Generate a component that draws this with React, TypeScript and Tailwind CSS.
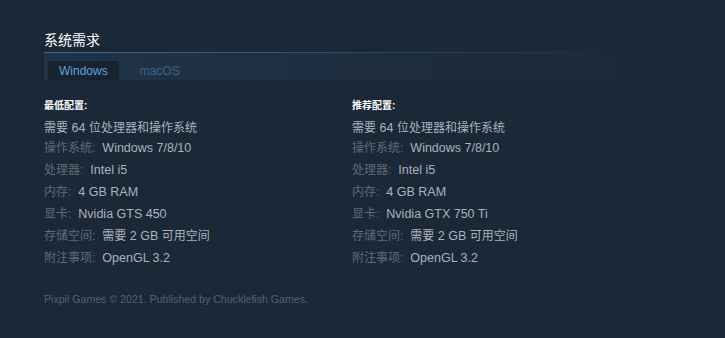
const font = { fontFamily: '"Liberation Sans", Arial, "Noto Sans CJK SC", sans-serif' }

type Req = { label?: string; value: string }

const minimum: Req[] = [
  { value: '需要 64 位处理器和操作系统' },
  { label: '操作系统:', value: 'Windows 7/8/10' },
  { label: '处理器:', value: 'Intel i5' },
  { label: '内存:', value: '4 GB RAM' },
  { label: '显卡:', value: 'Nvidia GTS 450' },
  { label: '存储空间:', value: '需要 2 GB 可用空间' },
  { label: '附注事项:', value: 'OpenGL 3.2' },
]

const recommended: Req[] = minimum.map((r) =>
  r.label === '显卡:' ? { ...r, value: 'Nvidia GTX 750 Ti' } : r
)

// CJK glyphs sit at 12px, latin runs a touch larger like the original page
function Mixed({ text }: { text: string }) {
  const parts = text.split(/([\u3000-\u9fff\uff00-\uffef]+)/).filter(Boolean)
  return (
    <>
      {parts.map((p, i) =>
        /[\u3000-\u9fff\uff00-\uffef]/.test(p) ? (
          <span key={i} className="text-[12px]">{p}</span>
        ) : (
          <span key={i} className="text-[12.5px]">{p}</span>
        )
      )}
    </>
  )
}

function ReqColumn({ title, items }: { title: string; items: Req[] }) {
  return (
    <div className="w-1/2">
      <div className="text-[10px] leading-[12px] font-bold text-white">{title}</div>
      <ul className="mt-[3px]">
        {items.map((item, i) => (
          <li
            key={i}
            className={`text-[12px] text-[#acb2b8] whitespace-nowrap ${i === 0 ? 'pt-[4px] leading-[18px]' : 'leading-[22px]'}`}
          >
            {item.label && <span className="text-[#5f6b77] mr-[7px]">{item.label}</span>}
            <Mixed text={item.value} />
          </li>
        ))}
      </ul>
    </div>
  )
}

export default function App() {
  return (
    <div className="w-[725px] h-[338px] bg-[#1b2838] overflow-hidden" style={font}>
      <div className="pl-[44px] pt-[32px] w-[660px]">
        {/* Header */}
        <h2 className="text-[14px] leading-[16px] text-white mb-[4px]">系统需求</h2>
        <div className="h-px w-[600px] bg-gradient-to-r from-[#3b6e8f] via-[#2c4e68] to-transparent" />
        <div className="h-[27px] w-[640px] flex items-end gap-[10px] pl-[4px] bg-gradient-to-r from-[#203346] to-transparent">
          <div className="h-[19px] px-[11px] flex items-center bg-[#172331] text-[12px] text-[#5ba6de]">
            Windows
          </div>
          <div className="h-[19px] px-[11px] flex items-center text-[12px] text-[#3f6487]">
            macOS
          </div>
        </div>

        {/* Requirements */}
        <div className="flex mt-[20px]">
          <ReqColumn title="最低配置:" items={minimum} />
          <ReqColumn title="推荐配置:" items={recommended} />
        </div>

        <div className="mt-[24px] text-[10.6px] leading-[12px] text-[#56616d]">
          Pixpil Games © 2021. Published by Chucklefish Games.
        </div>
      </div>
    </div>
  )
}
